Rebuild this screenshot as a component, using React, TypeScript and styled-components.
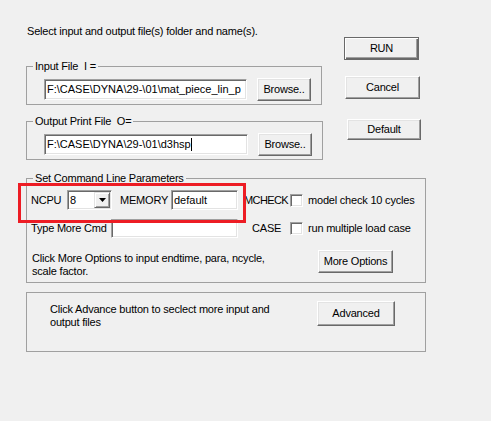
import React from "react";
import styled, { createGlobalStyle, css } from "styled-components";

const Global = createGlobalStyle`
  html, body { margin: 0; padding: 0; background: #f0f0f0; }
  body { font-family: "Liberation Sans", Arial, sans-serif; font-size: 11px; color: #000; }
`;

const Window = styled.div`
  position: relative;
  width: 491px;
  height: 421px;
  box-sizing: border-box;
  padding: 25px 0 0 26px;
  background: #f0f0f0;
  font-family: "Liberation Sans", Arial, sans-serif;
  font-size: 11px;
  line-height: 13px;
  letter-spacing: -0.2px;
  color: #000;
  overflow: hidden;
`;

const Top = styled.div`
  display: flex;
  align-items: flex-start;
`;

const LeftCol = styled.div`
  width: 296px;
  display: flex;
  flex-direction: column;
`;

const Intro = styled.div`
  padding-left: 1px;
  height: 13px;
  white-space: nowrap;
`;

const ButtonCol = styled.div`
  display: flex;
  flex-direction: column;
  margin-left: 22px;
`;

const Group = styled.fieldset<{ $w: number; $mt: number; $h?: number }>`
  margin: ${(p) => p.$mt}px 0 0 0;
  padding: 0;
  min-width: 0;
  width: ${(p) => p.$w}px;
  ${(p) => p.$h && css`height: ${p.$h}px;`}
  box-sizing: border-box;
  border: 1px solid #a0a0a0;
`;

const Caption = styled.legend`
  margin-left: 6px;
  padding: 0 2px;
  line-height: 13px;
  white-space: nowrap;
`;

const FileRow = styled.div`
  display: flex;
  align-items: center;
  padding: 5px 0 3px 17px;
`;

const Field = styled.div<{ $w: number; $h: number }>`
  box-sizing: border-box;
  width: ${(p) => p.$w}px;
  height: ${(p) => p.$h}px;
  flex: none;
  background: #fff;
  border: 1px solid;
  border-color: #a0a0a0 #fff #fff #a0a0a0;
  box-shadow: inset 1px 1px 0 #696969, inset -1px -1px 0 #e3e3e3;
  padding: 0 1px 0 2px;
  display: flex;
  align-items: center;
  white-space: nowrap;
  overflow: hidden;
  letter-spacing: 0;
`;

const Caret = styled.span`
  display: inline-block;
  width: 1px;
  height: 13px;
  background: #000;
`;

const WinButton = styled.button<{
  $w: number;
  $h: number;
  $mt?: number;
  $ml?: number;
  $primary?: boolean;
}>`
  box-sizing: border-box;
  flex: none;
  width: ${(p) => p.$w}px;
  height: ${(p) => p.$h}px;
  margin: ${(p) => p.$mt ?? 0}px 0 0 ${(p) => p.$ml ?? 0}px;
  padding: 0 0 1px;
  font: inherit;
  letter-spacing: inherit;
  color: #000;
  background: #f0f0f0;
  border: 1px solid;
  border-color: #fff #696969 #696969 #fff;
  box-shadow: inset -1px -1px 0 #a0a0a0, inset 1px 1px 0 #e3e3e3;
  ${(p) =>
    p.$primary &&
    css`
      border-color: #696969;
      box-shadow: inset 1px 1px 0 #fff, inset -1px -1px 0 #696969,
        inset -2px -2px 0 #a0a0a0;
    `}
`;

const CmdBody = styled.div`
  display: flex;
  flex-direction: column;
  padding: 5px 0 4px 4px;
`;

const Row = styled.div<{ $mt?: number }>`
  display: flex;
  align-items: center;
  margin-top: ${(p) => p.$mt ?? 0}px;
`;

const Label = styled.span<{ $w?: number; $ml?: number; $tight?: boolean }>`
  flex: none;
  ${(p) => p.$w && css`width: ${p.$w}px;`}
  margin-left: ${(p) => p.$ml ?? 0}px;
  white-space: nowrap;
  ${(p) => p.$tight && css`letter-spacing: -0.6px;`}
`;

const Check = styled.span`
  box-sizing: border-box;
  flex: none;
  width: 13px;
  height: 13px;
  background: #fff;
  border: 1px solid;
  border-color: #a0a0a0 #fff #fff #a0a0a0;
  box-shadow: inset 1px 1px 0 #696969, inset -1px -1px 0 #e3e3e3;
`;

const Combo = styled.div`
  box-sizing: border-box;
  flex: none;
  width: 45px;
  height: 20px;
  background: #fff;
  border: 1px solid;
  border-color: #a0a0a0 #fff #fff #a0a0a0;
  box-shadow: inset 1px 1px 0 #696969, inset -1px -1px 0 #e3e3e3;
  padding: 1px 1px 1px 2px;
  display: flex;
  align-items: center;
  justify-content: space-between;
`;

const DropButton = styled.span`
  box-sizing: border-box;
  width: 16px;
  height: 16px;
  background: #f0f0f0;
  border: 1px solid;
  border-color: #e3e3e3 #696969 #696969 #e3e3e3;
  box-shadow: inset 1px 1px 0 #fff, inset -1px -1px 0 #a0a0a0;
  display: flex;
  align-items: center;
  justify-content: center;
`;

const Note = styled.div<{ $w: number; $ml?: number; $mt?: number }>`
  flex: none;
  width: ${(p) => p.$w}px;
  margin: ${(p) => p.$mt ?? 0}px 0 0 ${(p) => p.$ml ?? 0}px;
  white-space: nowrap;
`;

const NoteRow = styled.div<{ $mt?: number; $pl?: number; $pt?: number }>`
  display: flex;
  align-items: flex-start;
  margin-top: ${(p) => p.$mt ?? 0}px;
  padding: ${(p) => p.$pt ?? 0}px 0 0 ${(p) => p.$pl ?? 0}px;
`;

const Highlight = styled.div`
  position: absolute;
  left: 18px;
  top: 183px;
  width: 228px;
  height: 40px;
  box-sizing: border-box;
  border: 3px solid #ed1c24;
  pointer-events: none;
`;

const DownArrow = () => (
  <svg width="7" height="4" viewBox="0 0 7 4">
    <path d="M0 0h7L3.5 4z" fill="#000" />
  </svg>
);

export default function App() {
  return (
    <>
      <Global />
      <Window>
        <Top>
          <LeftCol>
            <Intro>Select input and output file(s) folder and name(s).</Intro>
            <Group $w={296} $mt={22}>
              <Caption>Input File&nbsp; I =</Caption>
              <FileRow>
                <Field $w={203} $h={21}>F:\CASE\DYNA\29-\01\mat_piece_lin_p</Field>
                <WinButton $w={54} $h={23} $ml={10}>
                  Browse..
                </WinButton>
              </FileRow>
            </Group>
            <Group $w={297} $mt={10}>
              <Caption>Output Print File&nbsp; O=</Caption>
              <FileRow>
                <Field $w={204} $h={21}>
                  F:\CASE\DYNA\29-\01\d3hsp
                  <Caret />
                </Field>
                <WinButton $w={54} $h={23} $ml={10}>
                  Browse..
                </WinButton>
              </FileRow>
            </Group>
          </LeftCol>
          <ButtonCol>
            <WinButton $w={75} $h={23} $mt={12} $primary>
              RUN
            </WinButton>
            <WinButton $w={75} $h={23} $mt={16} $ml={1}>
              Cancel
            </WinButton>
            <WinButton $w={74} $h={21} $mt={20} $ml={3}>
              Default
            </WinButton>
          </ButtonCol>
        </Top>

        <Group $w={400} $mt={12}>
          <Caption>Set Command Line Parameters</Caption>
          <CmdBody>
            <Row>
              <Label $w={36}>NCPU</Label>
              <Combo>
                <span>8</span>
                <DropButton>
                  <DownArrow />
                </DropButton>
              </Combo>
              <Label $w={51} $ml={8}>
                MEMORY
              </Label>
              <Field $w={67} $h={20}>default</Field>
              <Label $w={46} $ml={6} $tight>
                MCHECK
              </Label>
              <Check />
              <Label $ml={5}>model check 10 cycles</Label>
            </Row>
            <Row $mt={9}>
              <Label $w={80}>Type More Cmd</Label>
              <Field $w={127} $h={19} />
              <Label $w={38} $ml={14}>
                CASE
              </Label>
              <Check />
              <Label $ml={5}>run multiple load case</Label>
            </Row>
            <NoteRow $mt={12}>
              <Note $w={286} $ml={1} $mt={2}>
                Click More Options to input endtime, para, ncycle,
                <br />
                scale factor.
              </Note>
              <WinButton $w={75} $h={23}>
                More Options
              </WinButton>
            </NoteRow>
          </CmdBody>
        </Group>

        <Group $w={400} $mt={9} $h={60}>
          <NoteRow $pl={23} $pt={8}>
            <Note $w={267} $mt={2}>
              Click Advance button to seclect more input and
              <br />
              output files
            </Note>
            <WinButton $w={78} $h={25}>
              Advanced
            </WinButton>
          </NoteRow>
        </Group>

        <Highlight />
      </Window>
    </>
  );
}
